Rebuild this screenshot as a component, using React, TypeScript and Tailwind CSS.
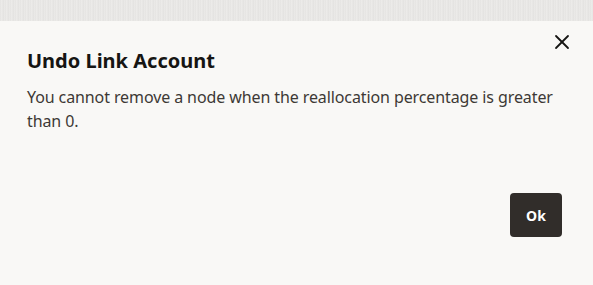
import { X } from 'lucide-react'

export default function App() {
  return (
    <div className="flex h-[285px] w-[593px] flex-col overflow-hidden bg-[#f9f8f6] font-['Noto_Sans',sans-serif] text-[#161513]">
      {/* textured page behind the dialog */}
      <div className="h-[21px] bg-[#e8e7e5] bg-[repeating-linear-gradient(90deg,#e4e3e1_0px,#eeedeb_2px,#e2e1df_3px,#ecebe9_5px)]" />

      {/* Dialog */}
      <div className="flex flex-1 flex-col px-[27px]">
        <div className="flex items-start justify-between pt-[26px]">
          <h1 className="text-[20px] font-bold leading-[28px]">Undo Link Account</h1>
          <button className="-mr-[12px] mt-[-21px] p-1 text-[#161513]">
            <X className="h-[24px] w-[24px]" strokeWidth={1.8} />
          </button>
        </div>
        <p className="mt-[10px] text-[16px] leading-[24px] tracking-[-0.1px] text-[#3d3935]">
          You cannot remove a node when the reallocation percentage is greater than 0.
        </p>
        <div className="mt-auto flex justify-end pb-[48px] pr-[4px]">
          <button className="h-[44px] w-[52px] rounded-[4px] bg-[#312d2a] text-[14px] font-bold text-white">
            Ok
          </button>
        </div>
      </div>
    </div>
  )
}
